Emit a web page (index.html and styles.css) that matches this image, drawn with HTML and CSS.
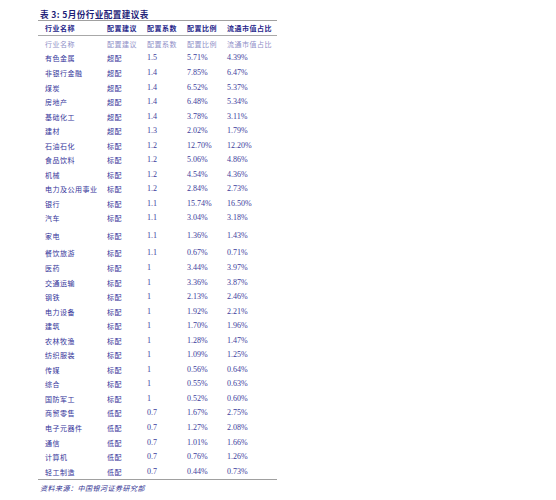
FILE: index.html
```html
<!DOCTYPE html>
<html lang="zh">
<head>
<meta charset="utf-8">
<link rel="stylesheet" href="styles.css">
</head>
<body>
<div class="page">
  <div class="title">表 3: 5月份行业配置建议表</div>
  <table class="tbl">
    <colgroup>
      <col class="c1"><col class="c2"><col class="c3"><col class="c4"><col class="c5">
    </colgroup>
    <thead>
      <tr class="head"><th>行业名称</th><th>配置建议</th><th>配置系数</th><th>配置比例</th><th>流通市值占比</th></tr>
    </thead>
    <tbody>
      <tr class="sub"><td>行业名称</td><td>配置建议</td><td>配置系数</td><td>配置比例</td><td>流通市值占比</td></tr>
      <tr><td>有色金属</td><td>超配</td><td class="n">1.5</td><td class="n">5.71%</td><td class="n">4.39%</td></tr>
      <tr><td>非银行金融</td><td>超配</td><td class="n">1.4</td><td class="n">7.85%</td><td class="n">6.47%</td></tr>
      <tr><td>煤炭</td><td>超配</td><td class="n">1.4</td><td class="n">6.52%</td><td class="n">5.37%</td></tr>
      <tr><td>房地产</td><td>超配</td><td class="n">1.4</td><td class="n">6.48%</td><td class="n">5.34%</td></tr>
      <tr><td>基础化工</td><td>超配</td><td class="n">1.4</td><td class="n">3.78%</td><td class="n">3.11%</td></tr>
      <tr><td>建材</td><td>超配</td><td class="n">1.3</td><td class="n">2.02%</td><td class="n">1.79%</td></tr>
      <tr><td>石油石化</td><td>标配</td><td class="n">1.2</td><td class="n">12.70%</td><td class="n">12.20%</td></tr>
      <tr><td>食品饮料</td><td>标配</td><td class="n">1.2</td><td class="n">5.06%</td><td class="n">4.86%</td></tr>
      <tr><td>机械</td><td>标配</td><td class="n">1.2</td><td class="n">4.54%</td><td class="n">4.36%</td></tr>
      <tr><td>电力及公用事业</td><td>标配</td><td class="n">1.2</td><td class="n">2.84%</td><td class="n">2.73%</td></tr>
      <tr><td>银行</td><td>标配</td><td class="n">1.1</td><td class="n">15.74%</td><td class="n">16.50%</td></tr>
      <tr><td>汽车</td><td>标配</td><td class="n">1.1</td><td class="n">3.04%</td><td class="n">3.18%</td></tr>
      <tr class="tall"><td>家电</td><td>标配</td><td class="n">1.1</td><td class="n">1.36%</td><td class="n">1.43%</td></tr>
      <tr><td>餐饮旅游</td><td>标配</td><td class="n">1.1</td><td class="n">0.67%</td><td class="n">0.71%</td></tr>
      <tr><td>医药</td><td>标配</td><td class="n">1</td><td class="n">3.44%</td><td class="n">3.97%</td></tr>
      <tr><td>交通运输</td><td>标配</td><td class="n">1</td><td class="n">3.36%</td><td class="n">3.87%</td></tr>
      <tr><td>钢铁</td><td>标配</td><td class="n">1</td><td class="n">2.13%</td><td class="n">2.46%</td></tr>
      <tr><td>电力设备</td><td>标配</td><td class="n">1</td><td class="n">1.92%</td><td class="n">2.21%</td></tr>
      <tr><td>建筑</td><td>标配</td><td class="n">1</td><td class="n">1.70%</td><td class="n">1.96%</td></tr>
      <tr><td>农林牧渔</td><td>标配</td><td class="n">1</td><td class="n">1.28%</td><td class="n">1.47%</td></tr>
      <tr><td>纺织服装</td><td>标配</td><td class="n">1</td><td class="n">1.09%</td><td class="n">1.25%</td></tr>
      <tr><td>传媒</td><td>标配</td><td class="n">1</td><td class="n">0.56%</td><td class="n">0.64%</td></tr>
      <tr><td>综合</td><td>标配</td><td class="n">1</td><td class="n">0.55%</td><td class="n">0.63%</td></tr>
      <tr><td>国防军工</td><td>标配</td><td class="n">1</td><td class="n">0.52%</td><td class="n">0.60%</td></tr>
      <tr><td>商贸零售</td><td>低配</td><td class="n">0.7</td><td class="n">1.67%</td><td class="n">2.75%</td></tr>
      <tr><td>电子元器件</td><td>低配</td><td class="n">0.7</td><td class="n">1.27%</td><td class="n">2.08%</td></tr>
      <tr><td>通信</td><td>低配</td><td class="n">0.7</td><td class="n">1.01%</td><td class="n">1.66%</td></tr>
      <tr><td>计算机</td><td>低配</td><td class="n">0.7</td><td class="n">0.76%</td><td class="n">1.26%</td></tr>
      <tr><td>轻工制造</td><td>低配</td><td class="n">0.7</td><td class="n">0.44%</td><td class="n">0.73%</td></tr>
    </tbody>
  </table>
  <div class="source">资料来源：中国银河证券研究部</div>
</div>
</body>
</html>
```

FILE: styles.css
```css
html, body {
  margin: 0;
  padding: 0;
  background: #ffffff;
}

.page {
  padding: 8px 0 0 38px;
  font-family: "Noto Sans CJK SC", "Liberation Serif", serif;
  color: #34349a;
}

.title {
  font-size: 8.6px;
  font-weight: bold;
  line-height: 12px;
  height: 12px;
  padding-left: 2px;
  letter-spacing: 0.4px;
  color: #1e1e78;
}

.tbl {
  border-collapse: collapse;
  table-layout: fixed;
  width: 239px;
  font-size: 7px;
  letter-spacing: 0.5px;
  border-top: 1.5px solid #a0a0a0;
  border-bottom: 1.5px solid #a0a0a0;
  margin-top: 0;
}

.c1 { width: 62px; }
.c2 { width: 40px; }
.c3 { width: 40px; }
.c4 { width: 40px; }
.c5 { width: 57px; }

.tbl th,
.tbl td {
  padding: 0 0 0 7px;
  text-align: left;
  white-space: nowrap;
  height: 14.55px;
  line-height: 10px;
  vertical-align: middle;
}

.tbl th {
  font-weight: bold;
  color: #26268a;
}

.head th {
  height: 14px;
  border-bottom: 1.2px solid #a8a8a8;
}

.sub td {
  color: #9090c8;
  height: 15.2px;
}

.tbl td.n {
  font-family: "Liberation Serif", serif;
  font-size: 8px;
  letter-spacing: 0;
  color: #3c3c9c;
}

.tall td {
  height: 20.4px;
}

.source {
  font-size: 7px;
  font-style: italic;
  letter-spacing: 0.5px;
  line-height: 10px;
  padding: 3px 0 0 2px;
  color: #2e2e90;
}
```
